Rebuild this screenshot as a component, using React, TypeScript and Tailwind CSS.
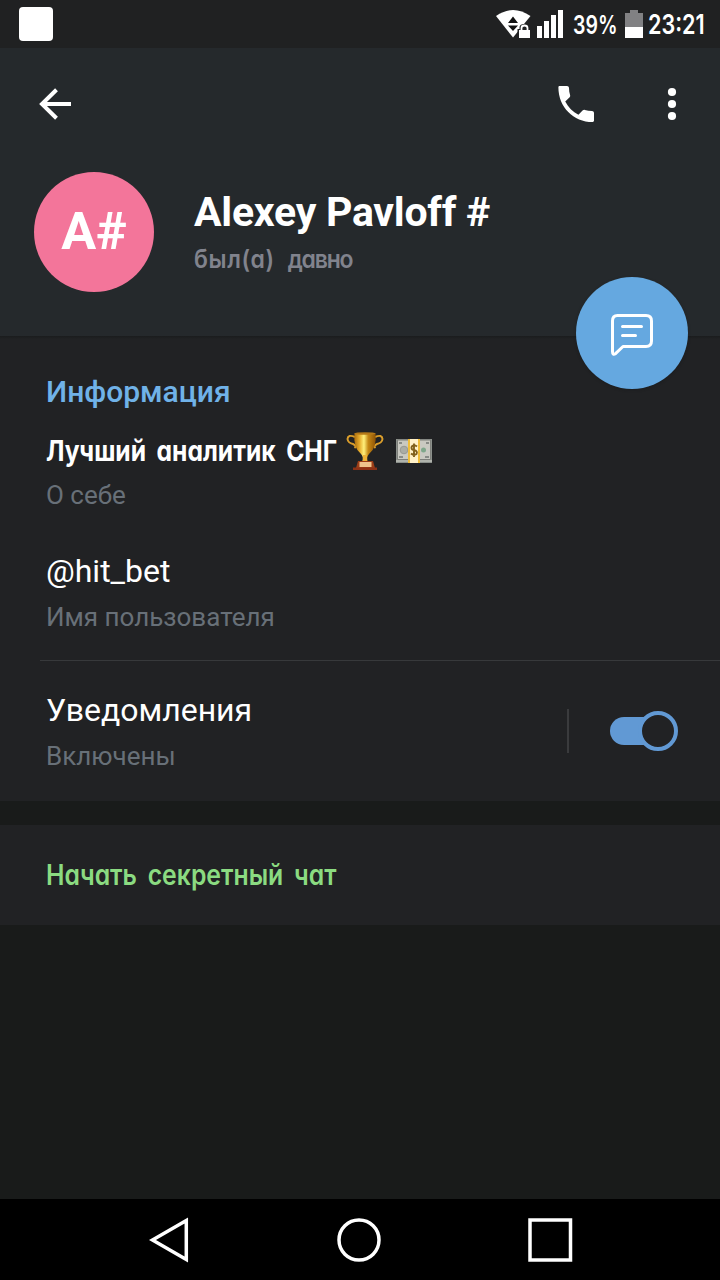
import React from "react";

const hand = "font-['Inter','Roboto',sans-serif] [font-feature-settings:'cv11'] inline-block origin-left whitespace-pre";

function StatusBar() {
  return (
    <div className="flex h-12 shrink-0 items-center bg-[#202122] pl-[19px] text-white">
      <div className="size-[34px] rounded-[4px] bg-white" />
      <svg className="ml-auto h-12 w-[68px] shrink-0" viewBox="496 0 68 48">
        <path d="M496 16Q513 4 530.5 16L513 37.500Z" fill="#fff" />
        <path d="M508 23L513 16.500L518 23ZM508 25.500H518L513 31Z" fill="#111" />
        <path d="M518 29H519.500V27Q520 24 524 24T528.500 27V29H531V39H517.500V29Z" fill="#202122" />
        <path d="M519 30H530V38H519Z" fill="#fff" />
        <path d="M521.500 31V28Q521.500 25.500 524.500 25.500T527.500 28V31" fill="none" stroke="#fff" strokeWidth="1.800" />
        <path d="M537 26h5v12h-5zM544 21h5v17h-5zM551 15h5v23h-5zM558 10h5v28h-5z" fill="#fff" />
      </svg>
      <div className="ml-[9px] w-[52px] pt-px">
        <span className={`${hand} scale-x-[0.780] text-[25px] leading-[48px] font-semibold`}>39%</span>
      </div>
      <svg className="h-12 w-[18px] shrink-0" viewBox="625 0 18 48">
        <path d="M630 10h8v3h5v14h-18v-14h5z" fill="#818183" />
        <path d="M625 27h18v11h-18z" fill="#fff" />
      </svg>
      <div className="ml-[5px] w-[72px] pt-px">
        <span className={`${hand} scale-x-[0.800] text-[27px] leading-[48px] font-semibold`}>23:21</span>
      </div>
    </div>
  );
}

function Header() {
  return (
    <header className="flex h-[288px] shrink-0 flex-col bg-[#25292c] text-white">
      <div className="flex h-[112px] items-center pl-[39px]">
        <svg className="h-[34px] w-[34px]" viewBox="39 87 34 34" fill="none" stroke="#fff" strokeWidth="4">
          <path d="M71 104H42M56.500 89.800L42 104L56.500 118.200" />
        </svg>
        <svg className="ml-[479px] size-12" viewBox="0 0 24 24" fill="#fff">
          <path d="M6.620 10.790c1.440 2.830 3.760 5.140 6.590 6.590l2.200-2.200c.270-.270.670-.360 1.020-.240 1.120.370 2.330.570 3.570.570.550 0 1 .450 1 1V20.300c0 .450-.250.700-.700.700-9.550 0-17.100-7.550-17.100-17.300 0-.450.250-.700.700-.700H7.500c.550 0 1 .450 1 1 0 1.250.200 2.450.570 3.570.110.350.030.740-.250 1.020l-2.200 2.200z" />
        </svg>
        <svg className="ml-[64px] h-10 w-4" viewBox="0 0 16 40" fill="#fff">
          <circle cx="8" cy="8" r="4.100" />
          <circle cx="8" cy="20" r="4.100" />
          <circle cx="8" cy="32" r="4.100" />
        </svg>
      </div>
      <div className="flex pl-[34px] pt-3">
        <div className="flex size-[120px] items-center justify-center rounded-full bg-[#f3759a]">
          <span className="font-['Roboto',sans-serif] text-[52px] leading-[120px] font-bold">A#</span>
        </div>
        <div className="ml-10 flex flex-col pt-[15px]">
          <h1 className="font-['Roboto',sans-serif] text-[41px] leading-[50px] font-bold tracking-[-0.250px] whitespace-pre">Alexey Pavloff #</h1>
          <div className="mt-1 h-9 leading-9">
            <span className={`${hand} scale-x-[0.920] text-[25px] leading-9 font-semibold text-[#81838d]`}>
              <span className="tracking-[0.700px]">был(а)  </span>
              <span className="tracking-[-1.300px]">давно</span>
            </span>
          </div>
        </div>
      </div>
    </header>
  );
}

function Trophy() {
  return (
    <svg className="h-10 w-[38px]" viewBox="0 0 38 40">
      <defs>
        <linearGradient id="gold">
          <stop stopColor="#a96b0c" />
          <stop offset=".25" stopColor="#e7ad2d" />
          <stop offset=".45" stopColor="#fff07b" />
          <stop offset=".65" stopColor="#c58814" />
          <stop offset="1" stopColor="#8d5205" />
        </linearGradient>
      </defs>
      <path d="M9 6Q2 3 1.500 8Q2 12 7 13Q11 15 8.500 17M29 6Q36 3 36.500 8Q36 12 31 13Q27 15 29.500 17" fill="none" stroke="#d99d2b" strokeWidth="2" />
      <path d="M8.500 2Q19 4 29.500 2Q31 17 23 23Q20 26 22 31H16Q18 26 15 23Q7 17 8.500 2Z" fill="url(#gold)" />
      <ellipse cx="19" cy="2.500" rx="10.500" ry="1.300" fill="#b57917" />
      <path d="M17 24h4v6h-4z" fill="#eeb235" />
      <path d="M12 30H27L29 37H10Z" fill="#9b3d17" />
      <path d="M13.500 31H25.500V36H13.500Z" fill="#efc58d" />
      <path d="M7 36.500h24v2.500h-24z" fill="#8c3216" />
    </svg>
  );
}

function Cash() {
  return (
    <svg className="h-[26px] w-[38px]" viewBox="0 0 38 26">
      <path d="M1 1H37V25H1Z" fill="#8b908b" />
      <path d="M2.500 2H35.500V21.500H2.500Z" fill="#c9c9c1" stroke="#7e807b" />
      <path d="M1 23h36" stroke="#d2d4cb" strokeWidth="1" />
      <circle cx="9" cy="12" r="3.800" fill="#aaaca5" stroke="#969892" />
      <circle cx="28.500" cy="12" r="2.500" fill="#7fa78b" />
      <path d="M4 5h3M4 19h4M31 5h3M30 19h4" stroke="#737773" strokeWidth="1.500" />
      <path d="M13 1H25V25H13Z" fill="#f0bd38" />
      <path d="M15 1H23V25H15Z" fill="#fff1c8" />
      <path d="M22 8.500Q19 6 16.800 8.500Q15.500 11.500 19 12Q23 13 21.500 16Q19 18 16 15.500M19 5.500V19" fill="none" stroke="#80601c" strokeWidth="1.900" />
    </svg>
  );
}

function Info() {
  return (
    <main className="flex h-[465px] shrink-0 flex-col bg-[#212224] font-['Roboto',sans-serif] text-white">
      <div className="h-[3px] shrink-0 bg-linear-to-b from-[#1a1c1d] to-[#212224]" />
      <div className="flex h-[321px] flex-col pl-[46px] pt-[33px]">
        <h2 className="h-10 text-[30px] leading-10 font-medium text-[#70b2e8]">Информация</h2>
        <div className="mt-[19px] flex h-10 items-center">
          <div className="w-[300px]">
            <span className={`${hand} scale-x-[0.850] text-[29px] leading-10 font-bold [word-spacing:-0.700px]`}>Лучший  аналитик  СНГ</span>
          </div>
          <Trophy />
          <div className="ml-[11px] flex">
            <Cash />
          </div>
        </div>
        <p className="mt-1 h-10 text-[26px] leading-10 text-[#687078]">О себе</p>
        <p className="mt-9 h-10 text-[32px] leading-10">@hit_bet</p>
        <p className="mt-1.5 h-10 text-[26px] leading-10 text-[#687078]">Имя пользователя</p>
      </div>
      <div className="ml-10 h-px shrink-0 bg-[#37393b]" />
      <div className="flex h-[140px] pl-[46px]">
        <div className="w-[521px] pt-[29px]">
          <p className="h-10 text-[32px] leading-10">Уведомления</p>
          <p className="mt-1.5 h-10 text-[26px] leading-10 text-[#687078]">Включены</p>
        </div>
        <div className="mt-12 h-11 w-0.5 bg-[#3a3b3d]" />
        <svg className="mt-[49px] ml-[40px] h-[42px] w-[70px]" viewBox="609 710 70 42">
          <rect x="610" y="717" width="50" height="28" rx="14" fill="#6199d4" />
          <circle cx="658" cy="731" r="18" fill="#212224" stroke="#6199d4" strokeWidth="4" />
        </svg>
      </div>
    </main>
  );
}

export default function App() {
  return (
    <div className="relative flex h-[1280px] w-[720px] flex-col overflow-hidden bg-[#191b1a]">
      <StatusBar />
      <Header />
      <Info />
      <section className="mt-6 flex h-[100px] shrink-0 items-center bg-[#212224] pl-[46px]">
        <span className={`${hand} scale-x-[0.885] text-[28px] leading-10 font-semibold text-[#8bdb81] [word-spacing:-1px]`}>Начать  секретный  чат</span>
      </section>
      <nav className="mt-auto flex h-[81px] items-center bg-black pl-[149px]">
        <svg className="h-[46px] w-10" viewBox="149 1217 40 46" fill="none" stroke="#fff" strokeWidth="3.500">
          <path d="M186.300 1220.500V1259.500L152.500 1240Z" />
        </svg>
        <svg className="ml-[147px] h-[46px] w-[46px]" viewBox="336 1217 46 46" fill="none" stroke="#fff" strokeWidth="3.500">
          <circle cx="359" cy="1240" r="20" />
        </svg>
        <svg className="ml-[145px] h-[46px] w-[46px]" viewBox="527 1217 46 46" fill="none" stroke="#fff" strokeWidth="3.500">
          <path d="M530 1220H570.500V1260H530Z" />
        </svg>
      </nav>
      <button aria-label="Message" className="absolute top-[277px] left-[576px] flex size-28 items-center justify-center rounded-full bg-[#65a8e0] pt-1 shadow-[0_1px_3px_#15161866]">
        <svg className="h-[44px] w-[44px]" viewBox="610 313 44 44" fill="none" stroke="#fff" strokeWidth="3" strokeLinecap="round" strokeLinejoin="round">
          <path d="M617.500 315.500H646Q651.500 315.500 651.500 321V341Q651.500 346.500 646 346.500H623L615.500 353.700Q612.500 355.500 612.500 351.500V321Q612.500 315.500 617.500 315.500ZM622.500 326.500H641.500M622.500 335.500H635.500" />
        </svg>
      </button>
    </div>
  );
}
